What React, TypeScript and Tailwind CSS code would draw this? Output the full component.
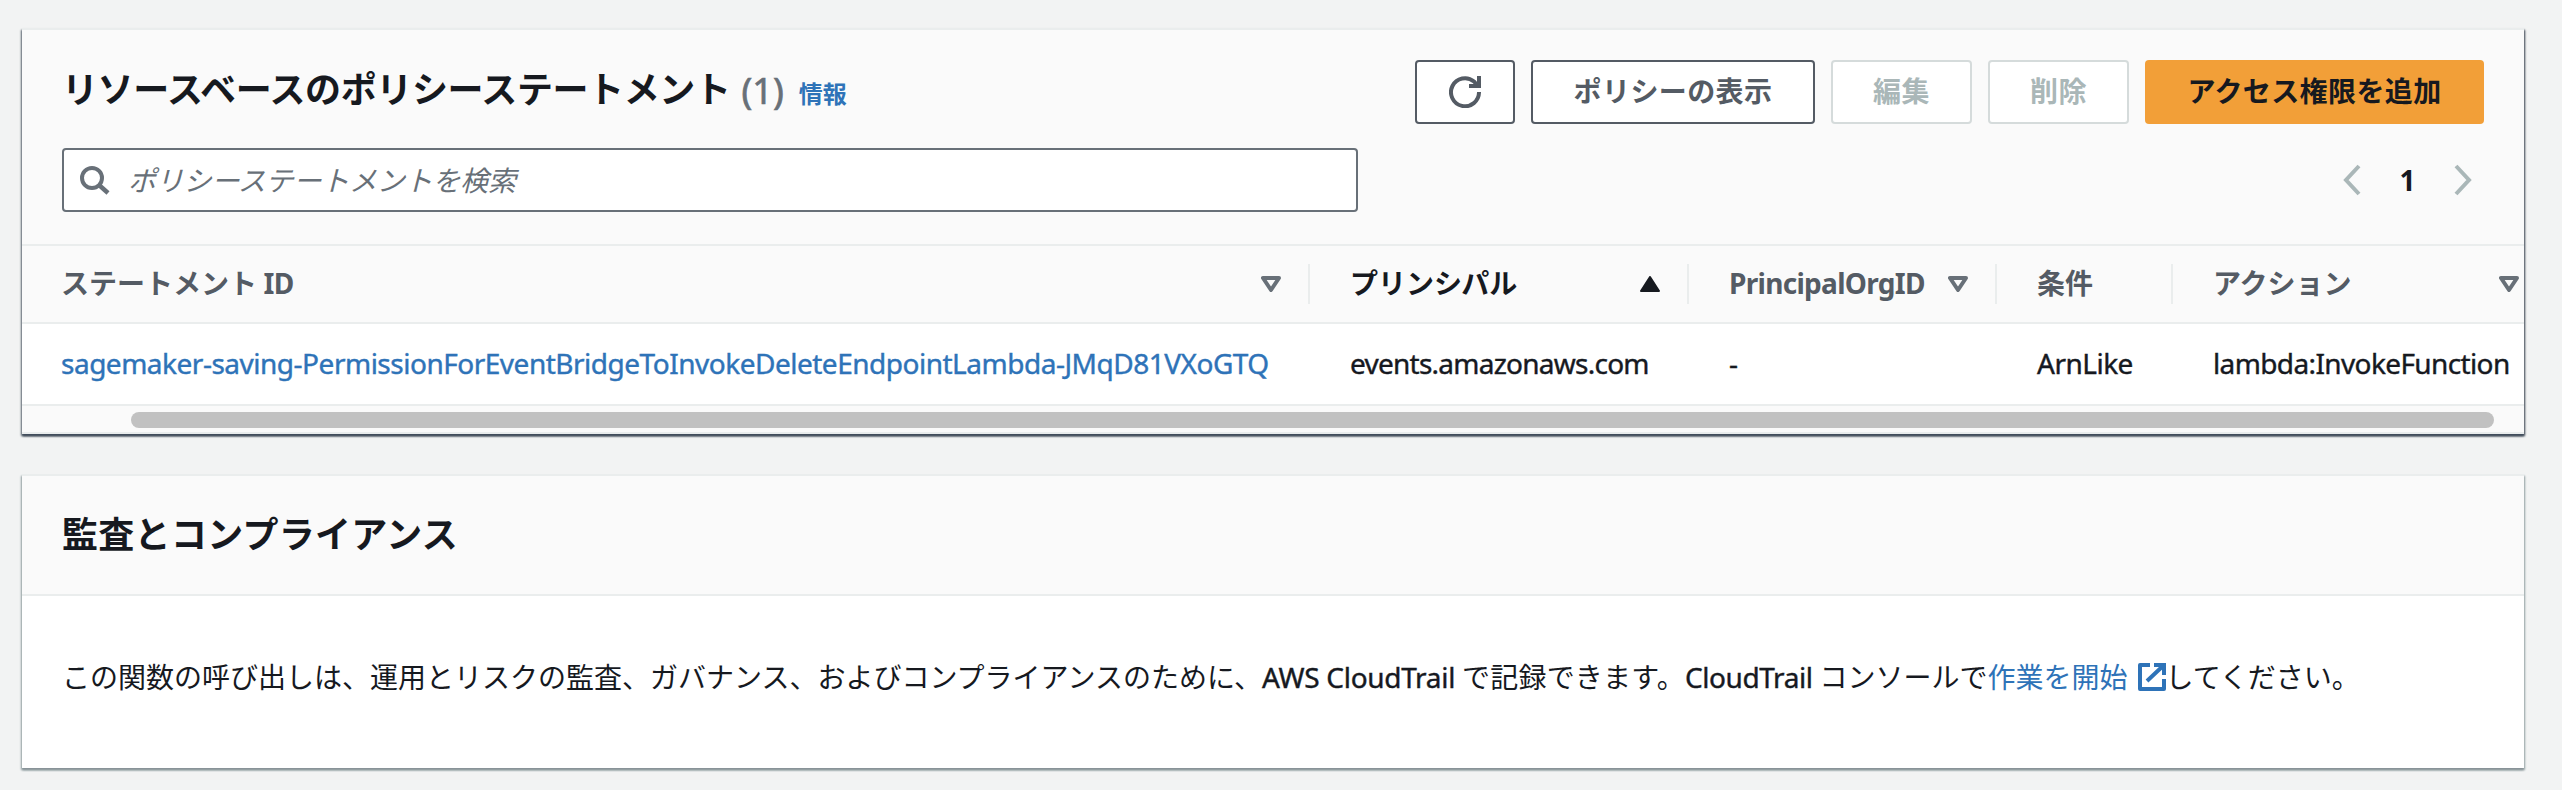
import React from "react";

const font = "font-['Noto_Sans','Noto_Sans_CJK_JP',sans-serif]";

const columns = [
  { label: "ステートメント", suffix: " ID", value: "sagemaker-saving-PermissionForEventBridgeToInvokeDeleteEndpointLambda-JMqD81VXoGTQ", width: "w-[1288px]", pad: "pl-[39px] pr-[27px]", sort: "none", link: true, track: "tracking-[-0.49px]" },
  { label: "プリンシパル", value: "events.amazonaws.com", width: "w-[379px]", pad: "pl-[40px] pr-[27px]", sort: "asc", track: "tracking-[-0.75px]" },
  { label: "", suffix: "PrincipalOrgID", value: "-", width: "w-[308px]", pad: "pl-[40px] pr-[27px]", sort: "none", track: "" },
  { label: "条件", value: "ArnLike", width: "w-[176px]", pad: "pl-[40px] pr-[20px]", sort: "", track: "tracking-[-0.5px]" },
  { label: "アクション", value: "lambda:InvokeFunction", width: "w-[351px]", pad: "pl-[40px] pr-[5px]", sort: "none", track: "tracking-[-0.62px]" },
];

function SortIcon({ kind }: { kind: string }) {
  if (kind === "asc") {
    return (
      <svg className="w-5 h-4 shrink-0" viewBox="0 0 20 16">
        <path d="M10 1 L19 15 H1 Z" fill="#16191f" stroke="#16191f" strokeWidth="2" strokeLinejoin="round" />
      </svg>
    );
  }
  return (
    <svg className="w-5 h-4 shrink-0" viewBox="0 0 20 16">
      <path d="M2 2 H18 L10 14 Z" fill="none" stroke="#687078" strokeWidth="4" strokeLinejoin="round" />
    </svg>
  );
}

function Panel({ className, children }: { className: string; children: React.ReactNode }) {
  return <section className={`bg-white border-t-2 border-[#eaeded] ${className}`}>{children}</section>;
}

export default function App() {
  return (
    <div className={`w-[2562px] h-[790px] overflow-hidden bg-[#f2f3f3] pt-[28px] pl-[22px] text-[28px] leading-[44px] text-[#16191f] whitespace-nowrap ${font}`}>
      <Panel className="w-[2502px] h-[406px] shadow-[0_2px_2px_0_#414d5c,1px_2px_2px_0_#545b64,-1px_2px_2px_0_#8d959b]">
        <div className="h-[216px] bg-[#fafafa] border-b-2 border-[#eaeded] pt-[30px] pl-[40px] pr-[40px]">
          <div className="flex items-center h-[64px]">
            <h2 className="-mt-[5px] text-[36px] font-bold tracking-[-0.4px]">リソースベースのポリシーステートメント</h2>
            <span className="-mt-[3px] ml-[11px] text-[36px] text-[#687078] [-webkit-text-stroke:0.7px]">(1)</span>
            <a className="ml-[15px] mt-[3px] text-[24px] font-bold text-[#2e73b8]">情報</a>
            <div className="ml-auto flex gap-[16px] font-bold tracking-[0.4px] leading-[42px] text-[#545b64]">
              <button className="w-[100px] h-[64px] flex items-center justify-center rounded-[4px] border-2 border-[#545b64] bg-white">
                <svg className="w-8 h-8" viewBox="0 0 32 32" fill="none" stroke="#545b64" strokeWidth="4">
                  <path d="M30 16 A14 14 0 1 1 25 5.5 L29 10" />
                  <path d="M30 0 V10 H20" />
                </svg>
              </button>
              <button className="w-[284px] h-[64px] pb-[2px] rounded-[4px] border-2 border-[#545b64] bg-white">ポリシーの表示</button>
              <button className="w-[141px] h-[64px] pb-[2px] rounded-[4px] border-2 border-[#d5dbdb] bg-white text-[#aab7b8]">編集</button>
              <button className="w-[141px] h-[64px] pb-[2px] rounded-[4px] border-2 border-[#d5dbdb] bg-white text-[#aab7b8]">削除</button>
              <button className="w-[339px] h-[64px] pb-[2px] rounded-[4px] bg-[#f29f38] text-[#16191f]">アクセス権限を追加</button>
            </div>
          </div>
          <div className="flex items-center mt-[24px] h-[64px]">
            <div className="w-[1296px] h-[64px] flex items-center rounded-[4px] border-2 border-[#687078] bg-white pl-[16px]">
              <svg className="w-[30px] h-[30px]" viewBox="0 0 30 30" fill="none" stroke="#687078" strokeWidth="4">
                <circle cx="12" cy="13" r="10" />
                <path d="M19 20 L28 28" strokeWidth="4.5" />
              </svg>
              <span className="ml-[18px] italic tracking-[-0.2px] text-[#687078]">ポリシーステートメントを検索</span>
            </div>
            <div className="ml-auto mr-[11px] flex items-center">
              <svg className="w-[18px] h-[32px]" viewBox="0 0 18 32" fill="none" stroke="#aab7b8" strokeWidth="4">
                <path d="M16 2 L3 16 L16 30" />
              </svg>
              <span className="w-[93px] text-center font-bold">1</span>
              <svg className="w-[19px] h-[32px]" viewBox="0 0 19 32" fill="none" stroke="#aab7b8" strokeWidth="4">
                <path d="M2 2 L15 16 L2 30" />
              </svg>
            </div>
          </div>
        </div>
        <div className="flex h-[78px] items-center bg-[#fafafa] border-b-2 border-[#eaeded]">
          {columns.map((c, i) => (
            <div key={c.value} className={`h-[40px] flex items-center justify-between font-bold ${c.width} ${c.pad} ${i < 4 ? "border-r-2 border-[#eaeded]" : ""} ${c.sort === "asc" ? "" : "text-[#545b64]"}`}>
              <span className="-mt-[2px]">
                {c.label}
                {c.suffix && <span className="tracking-[-0.7px]">{c.suffix}</span>}
              </span>
              {c.sort && <SortIcon kind={c.sort} />}
            </div>
          ))}
        </div>
        <div className="flex h-[82px] items-center border-b-2 border-[#eaeded] [-webkit-text-stroke:0.4px]">
          {columns.map((c) => (
            <div key={c.value} className={`-mt-[2px] ${c.width} ${c.pad} ${c.track} ${c.link ? "text-[#2e73b8]" : ""}`}>{c.value}</div>
          ))}
        </div>
        <div className="h-[28px] bg-[#fafafa] border-b-2 border-[#eaeded] pt-[6px] pl-[109px]">
          <div className="w-[2363px] h-[16px] rounded-full bg-[#c1c1c1]" />
        </div>
      </Panel>

      <Panel className="mt-[40px] w-[2502px] h-[294px] shadow-[0_2px_2px_0_#879196,1px_2px_2px_0_#aab7b8,-1px_2px_2px_0_#aab7b8]">
        <div className="flex items-center h-[120px] bg-[#fafafa] border-b-2 border-[#eaeded] pl-[40px]">
          <h2 className="text-[36px] font-bold tracking-[0.3px]">監査とコンプライアンス</h2>
        </div>
        <p className="pl-[40px] pt-[59px] flex items-center">
          <span>この関数の呼び出しは、運用とリスクの監査、ガバナンス、およびコンプライアンスのために、</span>
          <span className="tracking-[-0.3px] [-webkit-text-stroke:0.4px]">AWS CloudTrail&nbsp;</span>
          <span className="tracking-[0.2px]">で記録できます。</span>
          <span className="tracking-[-0.4px] [-webkit-text-stroke:0.4px]">CloudTrail&nbsp;</span>
          <span>コンソールで</span>
          <a className="flex items-center text-[#2e73b8]">
            作業を開始
            <svg className="w-7 h-7 ml-[10px]" viewBox="0 0 28 28" fill="none" stroke="#2e73b8" strokeWidth="4">
              <path d="M12 2 H2 V26 H26 V16" strokeLinejoin="round" />
              <path d="M16 2 H26 V12 M26 2 L9 18" />
            </svg>
          </a>
          <span>してください。</span>
        </p>
      </Panel>
    </div>
  );
}
